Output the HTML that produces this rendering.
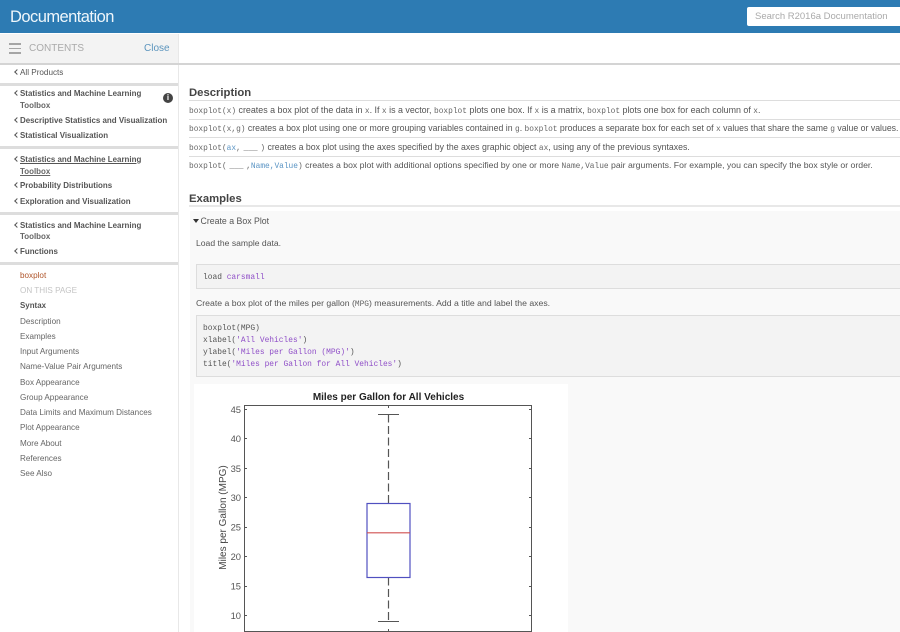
<!DOCTYPE html>
<html><head><meta charset="utf-8"><style>
html,body{margin:0;padding:0;background:#fff}
#p{position:relative;width:900px;height:632px;overflow:hidden;font-family:"Liberation Sans",sans-serif;font-size:8.15px;color:#555;filter:blur(.35px)}
#p div{position:absolute;white-space:nowrap}
.s{left:20px;font-size:8.15px;line-height:12px;color:#666;margin-top:1px}
.b{font-weight:bold;color:#555}
.ch{left:20px;font-size:7.95px;line-height:12px;color:#555;font-weight:bold;margin-top:.7px}
.ch::before{content:"";position:absolute;left:-5px;top:3.500px;width:3px;height:3px;border-left:1px solid #555;border-bottom:1px solid #555;transform:rotate(45deg)}
.t{font-size:8.15px;line-height:12px;color:#666;margin-top:.7px}
.n{font-weight:normal}
.d{left:189px;line-height:12px;color:#555}
code{font-family:"Liberation Mono",monospace;font-size:7.85px;color:#666}
.ws{word-spacing:-2px}
.v{color:#5a94c4}
.hr{background:#ddd;height:1px}
.sb{background:#ddd;height:3px;left:0;width:178px}
.m{font-family:"Liberation Mono",monospace;font-size:7.9px;line-height:12px;color:#555;margin-top:1.300px}
.m i{font-style:normal;color:#9050c8}
.hb{left:9px;width:12px;height:1.500px;background:#a5a5a5}
</style></head><body><div id="p">
<div style="left:0;top:0;width:900px;height:33px;background:#2d7bb3"></div>
<div style="left:10px;top:7px;font-size:16.5px;line-height:20px;color:#eef6fb;letter-spacing:-.55px">Documentation</div>
<div style="left:747px;top:7px;width:160px;height:19px;background:#fff;border-radius:2px"></div>
<div style="left:755px;top:10px;font-size:9.5px;line-height:13px;color:#aaa">Search R2016a Documentation</div>

<div style="left:0;top:34px;width:178px;height:29px;background:#f3f3f3"></div>
<div style="left:178px;top:34px;width:1px;height:598px;background:#e8e8e8"></div>
<div style="left:0;top:63px;width:900px;height:2px;background:#d4d4d4"></div>
<div class="hb" style="top:43px"></div>
<div class="hb" style="top:47.500px"></div>
<div class="hb" style="top:52px"></div>
<div style="left:29px;top:42px;font-size:10px;line-height:13px;color:#aaa">CONTENTS</div>
<div style="left:144px;top:42px;font-size:10px;line-height:13px;color:#5b94bd">Close</div>

<div class="ch n" style="top:66px;font-size:8.15px">All Products</div>
<div class="sb" style="top:83px"></div>
<div class="ch" style="top:87px">Statistics and Machine Learning</div>
<div class="t b" style="top:99px;left:20px;font-size:7.95px">Toolbox</div>
<div class="ch" style="top:114px">Descriptive Statistics and Visualization</div>
<div class="ch" style="top:129px">Statistical Visualization</div>
<div style="left:163px;top:93px;width:10px;height:10px;border-radius:50%;background:#444;color:#fff;font-size:8px;line-height:10px;text-align:center;font-weight:bold">i</div>
<div class="sb" style="top:146px"></div>
<div class="ch" style="top:153px"><u>Statistics and Machine Learning</u></div>
<div class="t b" style="top:165px;left:20px;font-size:7.95px"><u>Toolbox</u></div>
<div class="ch" style="top:179px">Probability Distributions</div>
<div class="ch" style="top:195px">Exploration and Visualization</div>
<div class="sb" style="top:212px"></div>
<div class="ch" style="top:219px">Statistics and Machine Learning</div>
<div class="t b" style="top:230px;left:20px;font-size:7.95px">Toolbox</div>
<div class="ch" style="top:245px">Functions</div>
<div class="sb" style="top:262px"></div>

<div class="s" style="top:269px;color:#b0552a">boxplot</div>
<div class="s" style="top:284px;color:#c4c4c4">ON THIS PAGE</div>
<div class="s b" style="top:299px;font-size:7.95px">Syntax</div>
<div class="s" style="top:315px">Description</div>
<div class="s" style="top:330px">Examples</div>
<div class="s" style="top:345px">Input Arguments</div>
<div class="s" style="top:360px">Name-Value Pair Arguments</div>
<div class="s" style="top:376px">Box Appearance</div>
<div class="s" style="top:391px">Group Appearance</div>
<div class="s" style="top:406px">Data Limits and Maximum Distances</div>
<div class="s" style="top:421px">Plot Appearance</div>
<div class="s" style="top:437px">More About</div>
<div class="s" style="top:452px">References</div>
<div class="s" style="top:467px">See Also</div>

<div style="left:189px;top:85.500px;font-size:11.3px;line-height:14px;font-weight:bold;color:#444">Description</div>
<div class="hr" style="left:189px;top:100px;width:711px"></div>
<div class="d" style="top:104px;font-size:8.89px"><code>boxplot(x)</code> creates a box plot of the data in <code>x</code>. If <code>x</code> is a vector, <code>boxplot</code> plots one box. If <code>x</code> is a matrix, <code>boxplot</code> plots one box for each column of <code>x</code>.</div>
<div class="hr" style="left:189px;top:119px;width:711px"></div>
<div class="d" style="top:122px;font-size:8.72px"><code>boxplot(x,g)</code> creates a box plot using one or more grouping variables contained in <code>g</code>. <code>boxplot</code> produces a separate box for each set of <code>x</code> values that share the same <code>g</code> value or values.</div>
<div class="hr" style="left:189px;top:137px;width:711px"></div>
<div class="d" style="top:141px;font-size:8.75px"><code class="ws">boxplot(<span class="v">ax</span>, ___ )</code> creates a box plot using the axes specified by the axes graphic object <code>ax</code>, using any of the previous syntaxes.</div>
<div class="hr" style="left:189px;top:156px;width:711px"></div>
<div class="d" style="top:159px;font-size:8.7px"><code class="ws">boxplot( ___ ,<span class="v">Name,Value</span>)</code> creates a box plot with additional options specified by one or more <code>Name,Value</code> pair arguments. For example, you can specify the box style or order.</div>

<div style="left:189px;top:191.500px;font-size:11.3px;line-height:14px;font-weight:bold;color:#444">Examples</div>
<div style="left:189px;top:205px;width:711px;height:2px;background:#e8e8e8"></div>
<div style="left:190px;top:211px;width:710px;height:421px;background:#f9f9f9"></div>
<div style="left:193px;top:219px;width:0;height:0;border-left:3.5px solid transparent;border-right:3.5px solid transparent;border-top:4px solid #333"></div>
<div style="left:200.500px;top:215px;font-size:8.75px;line-height:12px;color:#555">Create a Box Plot</div>
<div style="left:196px;top:237px;font-size:8.6px;line-height:12px;color:#555">Load the sample data.</div>
<div style="left:196px;top:264px;width:704px;height:25px;background:#f3f3f3;border:1px solid #ddd;border-right:0;box-sizing:border-box"></div>
<div class="m" style="left:203px;top:271px">load <i>carsmall</i></div>
<div style="left:196px;top:297px;font-size:8.7px;line-height:12px;color:#555">Create a box plot of the miles per gallon (<code>MPG</code>) measurements. Add a title and label the axes.</div>
<div style="left:196px;top:315px;width:704px;height:62px;background:#f3f3f3;border:1px solid #ddd;border-right:0;box-sizing:border-box"></div>
<div class="m" style="left:203px;top:322px">boxplot(MPG)<br>xlabel(<i>'All Vehicles'</i>)<br>ylabel(<i>'Miles per Gallon (MPG)'</i>)<br>title(<i>'Miles per Gallon for All Vehicles'</i>)</div>

<svg style="position:absolute;left:194px;top:384px" width="374" height="248" viewBox="194 384 374 248">
<rect x="194" y="384" width="374" height="248" fill="#fff"/>
<rect x="244.500" y="405.500" width="287" height="226" fill="none" stroke="#555" stroke-width="1"/>
<path d="M244 409.500h3M244 438.500h3M244 468.500h3M244 497.500h3M244 527.500h3M244 556.500h3M244 586.500h3M244 615.500h3M532 409.500h-3M532 438.500h-3M532 468.500h-3M532 497.500h-3M532 527.500h-3M532 556.500h-3M532 586.500h-3M532 615.500h-3M388.500 405v3M388.500 632v-3" stroke="#555" fill="none"/>
<g font-family="Liberation Sans, sans-serif" font-size="9.400" fill="#555" text-anchor="end">
<text x="241" y="413">45</text><text x="241" y="442">40</text><text x="241" y="472">35</text><text x="241" y="501">30</text><text x="241" y="530.500">25</text><text x="241" y="560">20</text><text x="241" y="589.500">15</text><text x="241" y="619">10</text>
</g>
<text x="388.500" y="400" text-anchor="middle" font-family="Liberation Sans, sans-serif" font-size="10" font-weight="bold" fill="#222">Miles per Gallon for All Vehicles</text>
<text transform="translate(226,517.500) rotate(-90)" text-anchor="middle" font-family="Liberation Sans, sans-serif" font-size="10" fill="#444">Miles per Gallon (MPG)</text>
<path d="M388.500 414.500V503M388.500 577.500V621.500" stroke="#555" stroke-width="1.200" stroke-dasharray="8 3.500" fill="none"/>
<path d="M378 414.500h21M378 621.500h21" stroke="#555" fill="none"/>
<rect x="367" y="503.500" width="43" height="74" fill="none" stroke="#5050c0" stroke-width="1.200"/>
<path d="M367 532.800h43" stroke="#d05050" stroke-width="1.200" fill="none"/>
</svg>
</div></body></html>
